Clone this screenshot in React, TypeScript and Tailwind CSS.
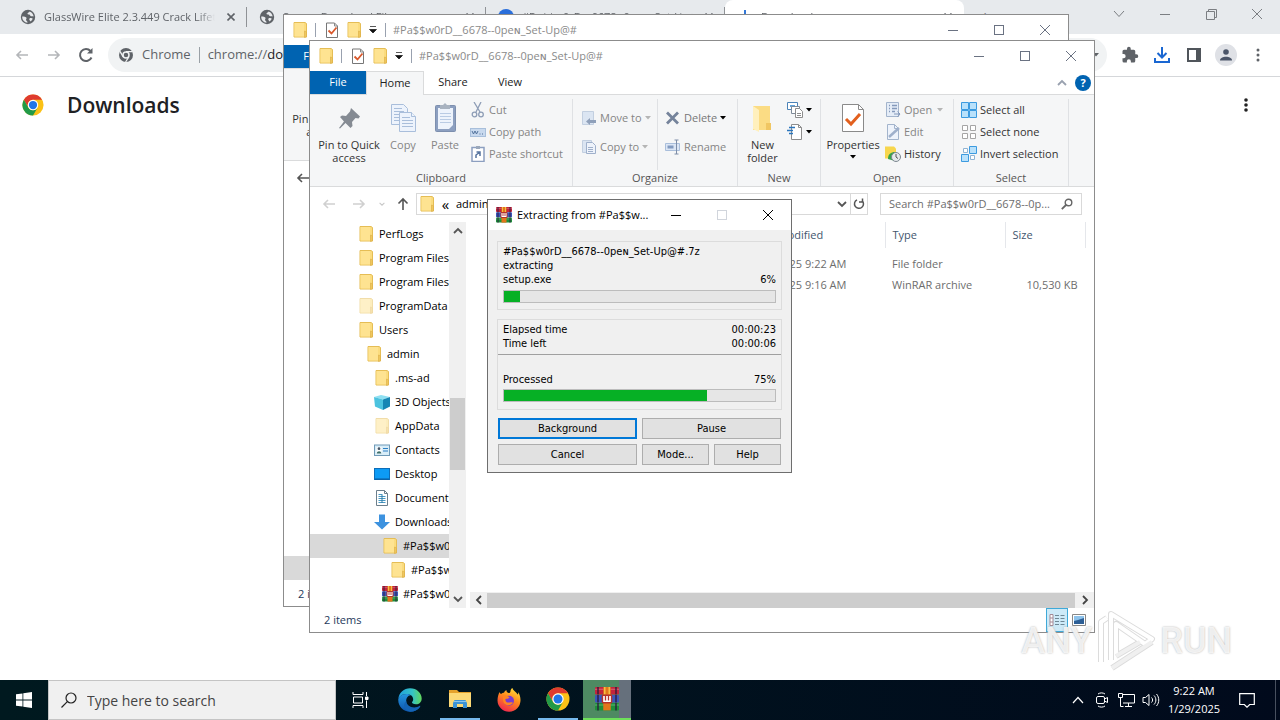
import React from 'react';

type IconProps = { className?: string };

const uiFont = "font-['Open_Sans','DejaVu_Sans',sans-serif]";

const treeRows = [
    { label: 'PerfLogs', icon: 'folder', indent: 'pl-[48px]' },
    { label: 'Program Files', icon: 'folder', indent: 'pl-[48px]' },
    { label: 'Program Files (x86)', icon: 'folder', indent: 'pl-[48px]' },
    { label: 'ProgramData', icon: 'faded', indent: 'pl-[48px]' },
    { label: 'Users', icon: 'folder', indent: 'pl-[48px]' },
    { label: 'admin', icon: 'folder', indent: 'pl-[56px]' },
    { label: '.ms-ad', icon: 'folder', indent: 'pl-[64px]' },
    { label: '3D Objects', icon: 'cube', indent: 'pl-[64px]' },
    { label: 'AppData', icon: 'faded', indent: 'pl-[64px]' },
    { label: 'Contacts', icon: 'contacts', indent: 'pl-[64px]' },
    { label: 'Desktop', icon: 'desktop', indent: 'pl-[64px]' },
    { label: 'Documents', icon: 'documents', indent: 'pl-[64px]' },
    { label: 'Downloads', icon: 'downloads', indent: 'pl-[64px]' },
    { label: '#Pa$$w0rD__6678--0peɴ_Set-Up@#', icon: 'folder', indent: 'pl-[72px]' },
    { label: '#Pa$$w0rD__6678--0peɴ_Set-Up@#', icon: 'folder', indent: 'pl-[80px]' },
    { label: '#Pa$$w0rD__6678--0peɴ_Set-Up@#.7z', icon: 'rar', indent: 'pl-[72px]' },
];

const FolderIcon: React.FC<IconProps> = ({ className = 'size-4' }) => (
    <svg viewBox="0 0 16 16" className={className}>
        <path d="M2 .5h11l1.500 1v13.500H2z" fill="#fbdc7e" stroke="#e5bd55" />
        <path d="M2.500 1h9.500v13.500H2.500z" fill="#fee391" />
        <path d="M12.500 9l2 .8v5l-2 .7z" fill="#efc75e" stroke="#dcae48" strokeWidth=".6" />
    </svg>
);

const CheckDoc: React.FC<IconProps> = ({ className = 'size-4' }) => (
    <svg viewBox="0 0 16 16" className={className} fill="none">
        <path d="M2.500 1h8l3 3v11.500h-11z" fill="#fff" stroke="#777" />
        <path d="M10.500 1v3h3" stroke="#888" />
        <path d="M4.500 8.500l3 3 5-6" stroke="#d9582b" strokeWidth="1.800" />
    </svg>
);

const RarIcon: React.FC<IconProps> = ({ className = 'size-4' }) => (
    <svg viewBox="0 0 16 16" className={className}>
        <rect y="0" width="16" height="5" rx=".8" fill="#c2243c" />
        <rect y="5.300" width="16" height="5" rx=".8" fill="#3a55b8" />
        <rect y="10.600" width="16" height="5" rx=".8" fill="#1d8f3a" />
        <path d="M0 1.500h16M0 12h16" stroke="#fff" strokeOpacity=".3" strokeWidth=".7" />
        <path d="M2 0v5M14 0v5M2 5.300v5M14 5.300v5M2 10.600v5M14 10.600v5" stroke="#2b1a3c" strokeWidth=".9" />
        <rect x="5.500" width="5" height="15.600" fill="#e2761b" />
        <path d="M6.500 0v5M9.500 0v5" stroke="#f5c044" />
        <rect x="4.500" y="5" width="7" height="6" rx="1" fill="#b5332b" />
        <path d="M6 6v3.500h4V6M8 6v3.500" stroke="#fff" strokeWidth="1.100" fill="none" />
    </svg>
);

const ChromeLogo: React.FC<IconProps> = ({ className }) => (
    <svg viewBox="0 0 24 24" className={className}>
        <circle cx="12" cy="12" r="11.500" fill="#fbc116" />
        <path d="M2.040 6.250A11.500 11.500 0 0 1 21.960 6.250H12a5.750 5.750 0 0 0-4.980 8.630z" fill="#df3b2f" />
        <path d="M2.040 6.250A11.500 11.500 0 0 0 12 23.500l4.980-8.620a5.750 5.750 0 0 1-9.960 0z" fill="#229a48" />
        <circle cx="12" cy="12" r="5.700" fill="#fff" />
        <circle cx="12" cy="12" r="4.500" fill="#2176e8" />
    </svg>
);

const ChromeMono: React.FC<IconProps> = ({ className }) => (
    <svg viewBox="0 0 16 16" className={className} fill="none">
        <circle cx="8" cy="8" r="7" fill="#5f6368" />
        <circle cx="8" cy="8" r="3" stroke="#f1f3f4" strokeWidth="1.500" />
        <path d="M8 4.700h6.500M5.200 9.800L2 4.300M10.800 9.800L7.600 15" stroke="#f1f3f4" strokeWidth="1.300" />
    </svg>
);

const GlobeIcon: React.FC<IconProps> = ({ className = 'size-4' }) => (
    <svg viewBox="0 0 16 16" className={className}>
        <circle cx="8" cy="8" r="7.200" fill="#5f6368" />
        <path d="M2.200 7.500c2 .1 3.800.2 4.300 1.300.4 1.200-1 1.500-.2 2.600.5.700 1.200.6 1.200 2.400C4.500 13.500 2 11 2.200 7.500zM9.500 2.500c-.3 1.300-1.800 1-2 2.100-.2.900.8.900 1.800.9.900.1.500 1.500 1.700 1.700 1 .2 1.500-.3 2.600.4-.1-2.400-1.600-4.400-4.100-5.100zM9.500 9.500c1-.8 2.700-.6 3.300.3-.5 1.200-1.300 2-2.300 2.700-.5-1-1.900-2-1-3z" fill="#e8eaed" />
    </svg>
);

const CloseX: React.FC<IconProps> = ({ className }) => (
    <svg viewBox="0 0 12 12" className={className} fill="none" stroke="currentColor">
        <path d="M1 1l10 10M11 1L1 11" />
    </svg>
);

const Caret: React.FC<IconProps> = ({ className = 'text-black' }) => (
    <svg viewBox="0 0 6 4" className={`h-1 w-1.5 shrink-0 ${className}`}>
        <path d="M0 0h6L3 3.500z" fill="currentColor" />
    </svg>
);

const Chevron: React.FC<IconProps & { dir: 'up' | 'down' | 'left' | 'right' }> = ({ className = 'size-2.5', dir }) => {
    const paths = { up: 'M1 7l4-4 4 4', down: 'M1 3l4 4 4-4', left: 'M7 1L3 5l4 4', right: 'M3 1l4 4-4 4' };
    return (
        <svg viewBox="0 0 10 10" className={className} fill="none" stroke="currentColor" strokeWidth="1.800">
            <path d={paths[dir]} />
        </svg>
    );
};

const Arrow: React.FC<IconProps & { dir: 'up' | 'left' | 'right' }> = ({ className = 'size-4', dir }) => {
    const paths = { up: 'M8 14V3M3.500 7.500L8 3l4.500 4.500', left: 'M14 8H3M7 4L3 8l4 4', right: 'M2 8h11M9 4l4 4-4 4' };
    return (
        <svg viewBox="0 0 16 16" className={className} fill="none" stroke="currentColor" strokeWidth="1.600">
            <path d={paths[dir]} />
        </svg>
    );
};

const TreeIcon: React.FC<{ kind: string }> = ({ kind }) => {
    if (kind === 'folder') return <FolderIcon className="size-4 shrink-0" />;
    if (kind === 'faded') return <FolderIcon className="size-4 shrink-0 opacity-50" />;
    if (kind === 'rar') return <RarIcon className="size-4 shrink-0" />;
    return (
        <svg viewBox="0 0 16 16" className="size-4 shrink-0">
            {kind === 'cube' && (
                <>
                    <path d="M0 3l7-2 9 2-7 2.500z" fill="#8fe0f2" />
                    <path d="M0 3l9 2.500V16l-8-3.500z" fill="#4cc3df" />
                    <path d="M9 5.500L16 3v9.500L9 16z" fill="#1686b4" />
                </>
            )}
            {kind === 'contacts' && (
                <>
                    <rect x=".5" y="3" width="15" height="10.500" fill="#d8edf8" stroke="#6f9ab7" />
                    <rect x="2.500" y="5" width="5" height="6.500" fill="#fff" />
                    <circle cx="5" cy="6.700" r="1.400" fill="#456" />
                    <path d="M2.800 11.500c0-3 4.500-3 4.500 0z" fill="#3d6f6a" />
                    <path d="M9 6.500h5M9 9h5" stroke="#2c7fc4" strokeWidth="1.200" />
                </>
            )}
            {kind === 'desktop' && (
                <>
                    <rect x=".5" y="2.500" width="15" height="11" fill="#0d9bf5" stroke="#0d6db8" />
                    <path d="M1 13h14" stroke="#0a5a9c" />
                </>
            )}
            {kind === 'documents' && (
                <>
                    <path d="M2.500.5h8l3 3v12h-11z" fill="#fff" stroke="#6c7f8c" />
                    <path d="M10.500.5v3h3" fill="none" stroke="#6c7f8c" />
                    <path d="M4.500 4.500h4M4.500 6.500h7M4.500 8.500h7M4.500 10.500h7M4.500 12.500h7" stroke="#4a9ac4" />
                    <path d="M8 5v8" stroke="#2f7ba6" />
                </>
            )}
            {kind === 'downloads' && <path d="M5 .5h6v7.500h5L8 15.500 0 8h5z" fill="#3d92df" />}
        </svg>
    );
};

const WindowButtons: React.FC<{ dialog?: boolean }> = ({ dialog }) => {
    const tone = dialog ? 'text-black' : 'text-gray-500';
    return (
        <div className={`flex h-full shrink-0 ${tone}`}>
            <button aria-label="Minimize" className="flex w-[46px] items-center justify-center">
                <span className="h-px w-2.5 bg-current" />
            </button>
            <button aria-label="Maximize" className="flex w-[46px] items-center justify-center">
                <span className={`size-2.5 border ${dialog ? 'border-gray-300' : 'border-current'}`} />
            </button>
            <button aria-label="Close" className="flex w-[46px] items-center justify-center">
                <CloseX className="size-3" />
            </button>
        </div>
    );
};

const RibbonGroup: React.FC<{ label: string; className: string; children: React.ReactNode }> = ({ label, className, children }) => (
    <section className={`flex shrink-0 flex-col border-r border-[#dfe1e4] ${className}`}>
        <div className="flex h-[73px] text-[#858585]">{children}</div>
        <h3 className="text-center leading-4 text-[#555]">{label}</h3>
    </section>
);

const BigButton: React.FC<{ label: string; className: string; icon: React.ReactNode; caret?: boolean }> = ({ label, className, icon, caret }) => (
    <button className={`flex flex-col items-center justify-start pt-[3px] leading-[13px] ${className}`}>
        {icon}
        <span className="pt-1">{label}</span>
        {caret && <span className="flex h-3 items-center"><Caret /></span>}
    </button>
);

const SmallButton: React.FC<{ label?: string; name?: string; icon: React.ReactNode; caret?: string; className?: string }> = ({ label, name, icon, caret, className = '' }) => (
    <button aria-label={name} className={`flex h-[22px] items-center gap-[3px] whitespace-nowrap ${className}`}>
        <svg viewBox="0 0 16 16" className="size-4 shrink-0" fill="none">{icon}</svg>
        {label && <span>{label}</span>}
        {caret && <Caret className={caret} />}
    </button>
);

const pageFold = (
    <>
        <path d="M2.500.5h7l4 4v11h-11z" fill="#eef3fb" stroke="#a3b4cc" />
        <path d="M9.500.5v4h4" stroke="#a3b4cc" />
    </>
);

const Ribbon: React.FC = () => (
    <div className="flex h-[92px] overflow-hidden border-b border-[#dadbdc] bg-[#f5f6f7] pt-1">
        <RibbonGroup label="Clipboard" className="w-[263px]">
            <BigButton
                label="Pin to Quick access"
                className="ml-1.5 w-[66px] text-[#333]"
                icon={
                    <svg viewBox="0 0 32 32" className="size-8">
                        <path d="M18 6l9 8.500-1.500 2-3-.5-3.500 4 .5 4-2 2-5-5L7 26.500l-1-.5L11 19.500 7 15l2-1.500 4 .5 4-4.500z" fill="#858b93" />
                    </svg>
                }
            />
            <BigButton
                label="Copy"
                className="w-[42px]"
                icon={
                    <svg viewBox="0 0 32 32" className="size-8" fill="#edf3fc" stroke="#a9bedb">
                        <path d="M4.500 2.500h12l4 4v16h-16z" />
                        <path d="M7 6.500h8M7 9.500h10M7 12.500h10M7 15.500h10M7 18.500h10" />
                        <path d="M12.500 10.500h12l4 4v15h-16z" />
                        <path d="M24.500 10.500v4h4M15 15.500h8M15 18.500h11M15 21.500h11M15 24.500h11" />
                    </svg>
                }
            />
            <BigButton
                label="Paste"
                className="w-[42px]"
                icon={
                    <svg viewBox="0 0 32 32" className="size-8">
                        <rect x="6.500" y="3.500" width="20" height="26" rx="1" fill="#8c9fc0" stroke="#7d8fae" />
                        <path d="M9 6h15v17l-4 4H9z" fill="#edf3fc" />
                        <path d="M11 11.500h11M11 14.500h11M11 17.500h11M11 20.500h11" stroke="#b9cbe4" />
                        <path d="M11 3h3l2-2 2 2h3v4H11z" fill="#a9b3c0" />
                    </svg>
                }
            />
            <div className="ml-1 flex flex-col">
                <SmallButton
                    label="Cut"
                    icon={
                        <g stroke="#8e9db6" strokeWidth="1.300">
                            <path d="M4 0l6 10M11 0L6 10" />
                            <circle cx="4.500" cy="12.500" r="2.300" />
                            <circle cx="11" cy="12.500" r="2.300" />
                        </g>
                    }
                />
                <SmallButton
                    label="Copy path"
                    icon={
                        <>
                            <rect x=".5" y="4.500" width="15" height="8" fill="#c8d9ee" stroke="#a8bfdb" />
                            <path d="M2 7l1.500 3L5 7l1.500 3L8 7M9.500 10h1M12 10h1" stroke="#51719b" />
                        </>
                    }
                />
                <SmallButton
                    label="Paste shortcut"
                    icon={
                        <>
                            <rect x="2" y="1.500" width="12" height="14" fill="#fff" stroke="#8c9fc0" strokeWidth="1.500" />
                            <path d="M6 0h4v3H6z" fill="#9ba8bb" />
                            <path d="M6 12V9l4-3M6.500 6H10v4" stroke="#57749f" strokeWidth="1.500" />
                        </>
                    }
                />
            </div>
        </RibbonGroup>
        <RibbonGroup label="Organize" className="w-[165px]">
            <div className="flex w-[85px] flex-col gap-[7px] border-r border-[#dfe1e4] pt-2 pl-2">
                <SmallButton label="Move to" caret="text-[#b5b5b5]" icon={<><path d="M1.500 1.500h11v13h-11z" fill="#dbe5f2" stroke="#c2cfe0" /><path d="M15 10v3H9v2l-4-3.500L9 8v2z" fill="#8fa0ba" /></>} />
                <SmallButton label="Copy to" caret="text-[#b5b5b5]" icon={<><path d="M1.500 1.500h9v12h-9z" fill="#dbe5f2" stroke="#c2cfe0" /><path d="M5.500 3.500h6l3 3v8h-9z" fill="#eef3fb" stroke="#9fb0cb" /><path d="M7 8.500h5M7 10.500h5M7 12.500h5" stroke="#9fb0cb" /></>} />
            </div>
            <div className="flex flex-col gap-[7px] pt-2 pl-[7px]">
                <SmallButton label="Delete" caret="text-black" className="text-[#777]" icon={<path d="M2 2.500l11 11M13 2.500l-11 11" stroke="#75839b" strokeWidth="2.800" />} />
                <SmallButton label="Rename" icon={<><path d="M.5 4.500h14v7H.5z" fill="#dbe6f5" stroke="#a9bedb" /><path d="M2.500 6.500h6v3h-6z" fill="#829bc0" /><path d="M9.500 1h4M11.500 1v14M9.500 15h4" stroke="#7e8ea8" /></>} />
            </div>
        </RibbonGroup>
        <RibbonGroup label="New" className="w-[83px]">
            <BigButton
                label="New folder"
                className="w-[49px] text-[#333]"
                icon={
                    <svg viewBox="0 0 32 32" className="size-8">
                        <path d="M6 4h17v24H6z" fill="#fbdc84" />
                        <path d="M19 21h5v7h-5z" fill="#f0c662" />
                        <path d="M6 4l6 4v22l-6-3z" fill="#fff0bd" />
                    </svg>
                }
            />
            <div className="flex flex-col">
                <SmallButton name="New item" caret="text-black" icon={<g fill="#fff"><path d="M.5.5h10v7H.5z" stroke="#4b83b8" /><path d="M3 3h5v2H3z" fill="#62a4dc" /><path d="M4.500 4.500h8v7h-8z" stroke="#7d8a99" /><path d="M8.500 6.500h4l3 3v6h-7z" stroke="#8d8d8d" /><path d="M10 11.500h4M10 13.500h4" stroke="#8d8d8d" /></g>} />
                <SmallButton name="Easy access" caret="text-black" icon={<><path d="M4.500.5h7l3 3v12h-10z" fill="#fff" stroke="#8d8d8d" /><path d="M11.500.5v3h3" stroke="#8d8d8d" /><path d="M2 3.500h6M0 6.500h6M2 9.500h4" stroke="#2b76bd" strokeWidth="1.400" /></>} />
            </div>
        </RibbonGroup>
        <RibbonGroup label="Open" className="w-[133px]">
            <BigButton label="Properties" caret className="w-[64px] text-[#333]" icon={
                <svg viewBox="0 0 32 32" className="size-8" fill="none">
                    <path d="M5.500 2.500h16l5 5v22h-21z" fill="#fff" stroke="#8a8a8a" />
                    <path d="M21.500 2.500v5h5" stroke="#8a8a8a" />
                    <path d="M9 17l5 5 9-10" stroke="#e2601e" strokeWidth="3" />
                </svg>
            } />
            <div className="flex flex-col">
                <SmallButton label="Open" caret="ml-0.5 text-[#b5b5b5]" icon={<><path d="M1.500.5h12v14h-12z" fill="#e4ecf7" stroke="#a3b4cc" /><path d="M4 3.500h1M4 6.500h1M4 9.500h1M7 3.500h5M7 6.500h5M7 9.500h3" stroke="#8499bb" strokeWidth="1.500" /><path d="M9 12h6M12.500 9.500L15 12l-2.500 3" stroke="#8499bb" /></>} />
                <SmallButton label="Edit" icon={<>{pageFold}<path d="M4 13L14 4" stroke="#9fb0cb" strokeWidth="2.500" /></>} />
                <SmallButton label="History" className="text-[#333]" icon={<><path d="M0 .5h9l2 2v10H0z" fill="#f7d64d" /><path d="M3 13c0-5 3-7 7-7v9z" fill="#37a34a" /><circle cx="11" cy="11" r="4.500" fill="#e6e9ec" stroke="#7c8790" /><path d="M11 8v3l2 1.500" stroke="#555" /></>} />
            </div>
        </RibbonGroup>
        <RibbonGroup label="Select" className="w-[115px]">
            <div className="flex flex-col pl-[7px] text-[#333]">
                <SmallButton label="Select all" icon={<path d="M.5.5h7v7h-7zM8.500.5h7v7h-7zM.5 8.500h7v7h-7zM8.500 8.500h7v7h-7z" fill="#b9e1fb" stroke="#3c9be0" />} />
                <SmallButton label="Select none" icon={<path d="M1.500 1.500h5v5h-5zM9.500 1.500h5v5h-5zM1.500 9.500h5v5h-5zM9.500 9.500h5v5h-5z" fill="#fff" stroke="#a5a5a5" />} />
                <SmallButton label="Invert selection" icon={<><path d="M8.500.5h7v7h-7zM.5 8.500h7v7h-7z" fill="#b9e1fb" stroke="#3c9be0" /><path d="M2.500 2.500h4v4h-4zM9.500 9.500h4v4h-4z" fill="#fff" stroke="#8fb4d4" /></>} />
            </div>
        </RibbonGroup>
    </div>
);

const Explorer: React.FC<{ className: string; activeRow: number; canGoBack?: boolean }> = ({ className, activeRow, canGoBack }) => (
    <div className={`absolute flex h-[593px] w-[786px] flex-col overflow-hidden border border-[#8c8c8c] bg-white text-[11px] ${uiFont} ${className}`}>
        <header className="flex h-[30px] shrink-0 items-center pl-2">
            <FolderIcon />
            <span className="ml-[7px] h-3.5 w-px bg-gray-400" />
            <CheckDoc className="ml-2 size-4" />
            <FolderIcon className="ml-1.5 size-4" />
            <svg viewBox="0 0 8 8" className="ml-[7px] size-2">
                <path d="M1 .5h6M.5 3.500h7L4 7z" fill="#111" stroke="#111" strokeWidth=".7" />
            </svg>
            <span className="ml-2 h-3.5 w-px bg-gray-400" />
            <h2 className="ml-[7px] flex-1 truncate text-[#8a8a8a]">#Pa$$w0rD__6678--0peɴ_Set-Up@#</h2>
            <WindowButtons />
        </header>
        <nav className="flex h-6 shrink-0 border-b border-[#dadbdc] text-[#222]">
            <button className="w-14 bg-[#0063b1] text-white">File</button>
            <button className="-mb-px w-[58px] border border-b-0 border-[#dadbdc] bg-[#f5f6f7]">Home</button>
            <button className="w-[58px]">Share</button>
            <button className="w-14">View</button>
            <div className="ml-auto flex items-center gap-2 pr-[3px]">
                <Chevron dir="up" className="size-2.5 text-gray-400" />
                <button aria-label="Help" className="size-4 rounded-full bg-[#0063b1] leading-4 font-bold text-white">?</button>
            </div>
        </nav>
        <Ribbon />
        <div className="flex h-[35px] shrink-0 items-center pr-3 pb-px pl-[11px]">
            <button aria-label="Back" className={canGoBack ? 'text-[#555]' : 'text-[#d0d0d0]'}><Arrow dir="left" /></button>
            <button aria-label="Forward" className="ml-3.5 text-[#d0d0d0]"><Arrow dir="right" /></button>
            <Chevron dir="down" className="ml-3 size-1.5 text-[#c8c8c8]" />
            <button aria-label="Up" className="ml-2.5 text-[#555]"><Arrow dir="up" /></button>
            <div className="ml-[5px] flex h-[22px] min-w-0 flex-1 items-center overflow-hidden border border-[#d9d9d9] pl-0.5">
                <FolderIcon className="size-4 shrink-0" />
                <span className="w-[21px] text-center text-[15px] leading-3">«</span>
                <span className="flex-1 truncate">admin › Downloads › #Pa$$w0rD__6678--0peɴ_Set-Up@#</span>
                <Chevron dir="down" className="mx-[3px] size-2.5 shrink-0 text-[#555]" />
                <button aria-label="Refresh" className="flex h-full w-[17px] shrink-0 items-center justify-center border-l border-[#d9d9d9] text-[#555]">
                    <svg viewBox="0 0 12 12" className="size-3" fill="none" stroke="currentColor" strokeWidth="1.500">
                        <path d="M4 1.800A4.500 4.500 0 1 0 9 2.500M9.500.5v3.500H6" />
                    </svg>
                </button>
            </div>
            <label className="ml-3 flex h-[22px] w-[202px] shrink-0 items-center border border-[#d9d9d9] pr-2 pl-2">
                <input type="text" aria-label="Search" placeholder="Search #Pa$$w0rD__6678--0p..." className="min-w-0 flex-1 outline-none placeholder:text-[#6d6d6d]" />
                <svg viewBox="0 0 12 12" className="size-3 shrink-0" fill="none" stroke="#666">
                    <circle cx="7.500" cy="4.500" r="3.300" strokeWidth="1.400" />
                    <path d="M5 7L.8 11.200" strokeWidth="1.800" />
                </svg>
            </label>
        </div>
        <div className="flex min-h-0 flex-1">
            <ul className="w-[139px] shrink-0 overflow-hidden">
                {treeRows.map((row, i) => (
                    <li key={i}>
                        <button className={`flex h-6 w-full items-center gap-[5px] whitespace-nowrap ${row.indent} ${i === activeRow ? 'bg-[#d9d9d9]' : ''}`}>
                            <TreeIcon kind={row.icon} />
                            {row.label}
                        </button>
                    </li>
                ))}
            </ul>
            <div className="flex w-[17px] shrink-0 flex-col items-center bg-[#f0f0f0] py-1 text-[#555]">
                <Chevron dir="up" />
                <div className="mt-[162px] h-[72px] w-[15px] bg-[#cdcdcd]" />
                <Chevron dir="down" className="mt-auto size-2.5" />
            </div>
            <div className="ml-1 flex min-w-0 flex-1 flex-col">
                <table className="w-[616px] table-fixed text-left text-[#6d6d6d]">
                    <thead>
                        <tr className="h-[26px] text-[#43566e]">
                            <th className="w-[273px] border-r border-gray-200 pl-5 font-normal">Name</th>
                            <th className="w-[142px] border-r border-gray-200 pl-[7px] font-normal">Date modified</th>
                            <th className="w-[120px] border-r border-gray-200 pl-[7px] font-normal">Type</th>
                            <th className="border-r border-gray-200 pl-[7px] font-normal">Size</th>
                        </tr>
                    </thead>
                    <tbody className="before:block before:h-1.5">
                        <tr className="h-[21px]">
                            <td className="truncate pl-5">#Pa$$w0rD__6678--0peɴ_Set-Up@#</td>
                            <td className="pl-[7px]">1/29/2025 9:22 AM</td>
                            <td className="pl-[7px]">File folder</td>
                            <td />
                        </tr>
                        <tr className="h-[21px]">
                            <td className="truncate pl-5">#Pa$$w0rD__6678--0peɴ_Set-Up@#.7z</td>
                            <td className="pl-[7px]">1/29/2025 9:16 AM</td>
                            <td className="pl-[7px]">WinRAR archive</td>
                            <td className="pr-2 text-right">10,530 KB</td>
                        </tr>
                    </tbody>
                </table>
                <div className="mt-auto flex h-4 items-center bg-[#f0f0f0] text-[#444]">
                    <span className="flex w-[17px] justify-center"><Chevron dir="left" /></span>
                    <span className="h-[15px] flex-1 bg-[#cdcdcd]" />
                    <span className="flex w-[19px] justify-center"><Chevron dir="right" /></span>
                </div>
            </div>
        </div>
        <footer className="flex h-6 shrink-0 items-center pr-2 pl-3.5 text-[#1e395b]">
            2 items
            <button aria-label="Details" className="ml-auto flex h-full w-[22px] items-center justify-center border border-[#3fa9d8] bg-[#cdeaf8]">
                <svg viewBox="0 0 16 14" className="h-3.5 w-4" fill="none">
                    <path d="M1 1.500h3v11H1zM1 5h3M1 9h3" fill="#fff" stroke="#a58a96" />
                    <path d="M6 2.500h4M6 5.500h4M6 8.500h4M6 11.500h4M11.500 2.500h4M11.500 5.500h4M11.500 8.500h4M11.500 11.500h4" stroke="#6f8896" />
                </svg>
            </button>
            <button aria-label="Large icons" className="ml-1">
                <svg viewBox="0 0 14 12" className="h-3 w-3.5">
                    <path d="M.5.5h13v11H.5z" fill="#fff" stroke="#888" />
                    <path d="M2 2h10v8H2z" fill="#8dc3ec" />
                    <path d="M2 7l4-1 6-2v6H2z" fill="#2d5f96" />
                </svg>
            </button>
        </footer>
    </div>
);

const Progress: React.FC<{ value: number; label: string }> = ({ value, label }) => (
    <div role="progressbar" aria-label={label} aria-valuenow={value} className="h-[13px] border border-[#bcbcbc] bg-[#e6e6e6]">
        <div className="h-full bg-[#06b025]" style={{ width: `${value}%` }} />
    </div>
);

const ExtractDialog: React.FC = () => (
    <div className={`absolute top-[199px] left-[487px] w-[305px] border border-[#6e6e6e] bg-[#f0f0f0] text-black ${uiFont}`}>
        <header className="flex h-[30px] items-center bg-white pl-2">
            <RarIcon className="size-4 shrink-0" />
            <h2 className="ml-[5px] flex-1 truncate text-[11px]">Extracting from #Pa$$w...</h2>
            <WindowButtons dialog />
        </header>
        <div className="px-[9px] pt-[11px] pb-[7px] font-['DejaVu_Sans_Condensed','DejaVu_Sans',sans-serif] text-[11px] leading-[14px]">
            <section className="h-[69px] border border-[#dcdcdc] px-[5px] pt-[3px]">
                <p>#Pa$$w0rD__6678--0peɴ_Set-Up@#.7z</p>
                <p>extracting</p>
                <p className="flex justify-between"><span>setup.exe</span><span>6%</span></p>
                <div className="pt-[3px]"><Progress value={6} label="setup.exe" /></div>
            </section>
            <section className="mt-[9px] h-[91px] border border-[#dcdcdc] pt-[3px]">
                <div className="px-[5px]">
                    <p className="flex justify-between"><span>Elapsed time</span><span>00:00:23</span></p>
                    <p className="flex justify-between"><span>Time left</span><span>00:00:06</span></p>
                </div>
                <hr className="mt-[3px] border-[#a0a0a0]" />
                <div className="px-[5px] pt-[18px]">
                    <p className="flex justify-between pb-0.5"><span>Processed</span><span>75%</span></p>
                    <Progress value={75} label="Processed" />
                </div>
            </section>
            <div className="mt-2 grid grid-cols-4 gap-[5px] px-px">
                <button className="col-span-2 h-[21px] border-2 border-[#0078d7] bg-[#e1e1e1]">Background</button>
                <button className="col-span-2 h-[21px] border border-[#adadad] bg-[#e1e1e1]">Pause</button>
                <button className="col-span-2 h-[21px] border border-[#adadad] bg-[#e1e1e1]">Cancel</button>
                <button className="h-[21px] border border-[#adadad] bg-[#e1e1e1]">Mode...</button>
                <button className="h-[21px] border border-[#adadad] bg-[#e1e1e1]">Help</button>
            </div>
        </div>
    </div>
);

const BrowserTab: React.FC<{ title: string; icon: React.ReactNode; active?: boolean }> = ({ title, icon, active }) => (
    <div className={`flex w-[239px] shrink-0 items-center px-3 ${active ? 'rounded-t-lg bg-white' : ''}`}>
        {icon}
        <span className="ml-2 flex-1 overflow-hidden mask-r-from-90% text-[11px] whitespace-nowrap text-[#5f6368]">{title}</span>
        <button aria-label="Close tab" className="ml-3 text-[#5f6368]">
            <svg viewBox="0 0 8 8" className="size-2" fill="none" stroke="currentColor" strokeWidth="1.600"><path d="M.5.5l7 7M7.500.5l-7 7" /></svg>
        </button>
        {!active && <span className="-mr-3 ml-[11px] h-5 w-px bg-[#8f9296]" />}
    </div>
);

const DownloadGlyph: React.FC<IconProps> = ({ className }) => (
    <svg viewBox="0 0 18 18" className={className} fill="none" stroke="#1a67d2" strokeWidth="2">
        <path d="M9 1v10M4.500 7L9 11.500 13.500 7M2 12v4h14v-4" />
    </svg>
);

const Browser: React.FC = () => (
    <div className={`flex flex-1 flex-col bg-white ${uiFont}`}>
        <div className="flex h-[34px] bg-[#e7eaed] pl-2">
            <div className="flex min-w-0 flex-1 overflow-hidden">
                <BrowserTab title="GlassWire Elite 2.3.449 Crack Lifetime" icon={<GlobeIcon />} />
                <BrowserTab title="Secure Download File" icon={<GlobeIcon />} />
                <BrowserTab title="#Pa$$w0rD__6678--0peɴ_Set-Up@#" icon={<span className="size-4 shrink-0 rounded-full bg-[#2a6fdb]" />} />
                <BrowserTab title="Downloads" active icon={<DownloadGlyph className="size-4" />} />
                <button aria-label="New tab" className="ml-4 text-lg leading-4 text-[#5f6368]">+</button>
            </div>
            <div className="flex h-7 text-[#7b7e82]">
                <button aria-label="Search tabs" className="flex w-[46px] items-center justify-center">
                    <svg viewBox="0 0 12 8" className="h-2 w-3" fill="none" stroke="currentColor"><path d="M1 1l5 5.500L11 1" /></svg>
                </button>
                <button aria-label="Minimize" className="flex w-[46px] items-center justify-center"><span className="h-px w-2.5 bg-current" /></button>
                <button aria-label="Restore" className="flex w-[46px] items-center justify-center">
                    <svg viewBox="0 0 11 11" className="size-[11px]" fill="none" stroke="currentColor"><path d="M.5 2.500h8v8h-8zM2.500 2.500v-2h8v8h-2" /></svg>
                </button>
                <button aria-label="Close" className="flex w-[46px] items-center justify-center"><CloseX className="size-3" /></button>
            </div>
        </div>
        <div className="flex h-[43px] items-center border-b border-[#d5d7da] pr-3.5 pl-3.5 text-[#5f6368]">
            <button aria-label="Back" className="text-[#b4b6b9]"><Arrow dir="left" /></button>
            <button aria-label="Forward" className="ml-4 text-[#b4b6b9]"><Arrow dir="right" /></button>
            <button aria-label="Reload" className="ml-4">
                <svg viewBox="0 0 16 16" className="size-4" fill="none" stroke="#5f6368" strokeWidth="2">
                    <path d="M13.500 10.500A6 6 0 1 1 12.500 4" /><path d="M14.500 1v5.500H9z" fill="#5f6368" stroke="none" />
                </svg>
            </button>
            <div className="mr-3.5 ml-3.5 flex h-[34px] flex-1 items-center rounded-full bg-[#f1f3f4] pl-2.5 text-[13px]">
                <ChromeMono className="size-4" />
                <span className="ml-2">Chrome</span>
                <span className="mx-2 h-4 w-px bg-[#9aa0a6]" />
                <span>chrome://<span className="text-[#202124]">downloads</span></span>
                <Caret className="mr-2 ml-auto text-[#5f6368]" />
            </div>
            <svg viewBox="0 0 24 24" className="size-[18px]" fill="#5f6368">
                <path d="M20.500 11H19V7a2 2 0 0 0-2-2h-4V3.500a2.500 2.500 0 0 0-5 0V5H4a2 2 0 0 0-2 2v3.800h1.500a2.700 2.700 0 0 1 0 5.400H2V20a2 2 0 0 0 2 2h3.800v-1.500a2.700 2.700 0 0 1 5.400 0V22H17a2 2 0 0 0 2-2v-4h1.500a2.500 2.500 0 0 0 0-5z" />
            </svg>
            <DownloadGlyph className="ml-3.5 size-[18px]" />
            <svg viewBox="0 0 16 16" className="ml-[15px] size-4"><path d="M2 2h12v12H2z" fill="#fff" stroke="#50555b" strokeWidth="2" /><path d="M10 1h5v14h-5z" fill="#50555b" /></svg>
            <span className="ml-[13px] flex size-[22px] items-center justify-center rounded-full bg-[#dfe1e6]">
                <svg viewBox="0 0 14 14" className="size-3.5" fill="#4a5468"><circle cx="7" cy="4" r="2.800" /><path d="M1 12.500c0-5 12-5 12 0z" /></svg>
            </span>
            <svg viewBox="0 0 16 16" className="ml-[13px] size-4" fill="#5f6368"><circle cx="8" cy="3" r="1.500" /><circle cx="8" cy="8" r="1.500" /><circle cx="8" cy="13" r="1.500" /></svg>
        </div>
        <main className="flex items-center pt-3 pr-[26px] pl-[22px]">
            <ChromeLogo className="size-[22px]" />
            <h1 className="ml-[23px] text-[21px] leading-8 font-semibold text-[#202124]">Downloads</h1>
            <svg viewBox="0 0 16 16" className="ml-auto size-4" fill="#222"><circle cx="8" cy="3" r="1.800" /><circle cx="8" cy="8" r="1.800" /><circle cx="8" cy="13" r="1.800" /></svg>
        </main>
    </div>
);

const Watermark: React.FC = () => (
    <div className="absolute right-12 bottom-2 flex items-center gap-1 font-['Roboto','Liberation_Sans',sans-serif] text-[36px] leading-none font-medium text-white/80 [text-shadow:0_0_2px_#aaa]">
        <span>ANY</span>
        <svg viewBox="0 0 60 62" className="h-[62px] w-[60px]" fill="none" strokeLinejoin="round">
            <path d="M5 52V12l6-4M15 50V4l41 25-7 5L20 14v30M16 58l40-26M20 46l24-14" stroke="#dcdcdc" strokeWidth="6" />
            <path d="M5 52V12l6-4M15 50V4l41 25-7 5L20 14v30" stroke="#fff" strokeWidth="4" />
            <path d="M16 58l40-26M20 46l24-14" stroke="#f0f0f0" strokeWidth="4" />
        </svg>
        <span>RUN</span>
    </div>
);

const Taskbar: React.FC = () => (
    <div className={`flex h-10 bg-linear-to-r from-[#00191f] to-[#010a1c] text-white ${uiFont}`}>
        <button aria-label="Start" className="flex w-12 items-center justify-center">
            <svg viewBox="0 0 16 16" className="size-4" fill="#fff"><path d="M0 2.300L6.500 1.400v6.200H0zM7.300 1.300L16 0v7.600H7.300zM0 8.400h6.500v6.200L0 13.700zM7.300 8.400H16V16l-8.700-1.300z" /></svg>
        </button>
        <label className="flex w-72 items-center border border-[#c4c4c4] bg-[#f0f0f0] pl-3">
            <svg viewBox="0 0 16 16" className="size-4" fill="none" stroke="#222" strokeWidth="1.200"><circle cx="10" cy="6" r="5" /><path d="M6.300 9.700L.5 15.500" /></svg>
            <input type="text" aria-label="Search" placeholder="Type here to search" className="ml-2.5 min-w-0 flex-1 text-[14px] outline-none placeholder:text-[#444]" />
        </label>
        <button aria-label="Task View" className="flex w-12 items-center justify-center">
            <svg viewBox="0 0 17 16" className="h-4 w-[17px]" fill="none" stroke="#fff"><path d="M1 0v2.500h10V0M1.500 5h9v6h-9zM1 16v-2.500h10V16M14.500 0v4M14.500 8.500V16" /><path d="M13.500 5h2.500v2.500h-2.500z" fill="#fff" /></svg>
        </button>
        <button aria-label="Microsoft Edge" className="flex w-[52px] items-center justify-center">
            <svg viewBox="0 0 24 24" className="size-6">
                <defs>
                    <linearGradient id="edgeTop" x1="0" x2="1"><stop offset="0" stopColor="#1f9fe0" /><stop offset=".6" stopColor="#35c3c6" /><stop offset="1" stopColor="#62d75c" /></linearGradient>
                    <linearGradient id="edgeBody" x1="0" y1="0" x2="0" y2="1"><stop offset="0" stopColor="#2494de" /><stop offset="1" stopColor="#0d55ad" /></linearGradient>
                </defs>
                <path d="M.3 11C1 4.500 6 .3 12 .3c7 0 11.700 5 11.700 10.200 0 3.500-2.500 5.800-5.700 5.800-3 0-4-1.200-4-1.800 0-.7 1.200-1.200 1.200-3.200 0-2.800-2.700-5.200-6.500-5.200C4.500 6.100 1.500 8.300.3 11z" fill="url(#edgeTop)" />
                <path d="M.3 11C1.500 8 4.700 6.100 8.700 6.100c1.500 0 3 .4 4 1.200-3 .2-4.500 2.900-4.500 5.700 0 3.500 3.500 6.500 8 6.500 2.300 0 4.300-.8 5.300-1.500.6-.4 1 .1.600.7-2.300 3.500-6 5-10 5C5 23.700-.2 18 .3 11z" fill="url(#edgeBody)" />
                <path d="M8.200 13c0 5.500 6 10.500 13.900 5.700-2.300 3.500-6 5-10 5-6-1-7.900-7.200-3.900-10.700z" fill="#1464b5" />
            </svg>
        </button>
        <button aria-label="File Explorer" className="mx-1 flex w-10 items-center justify-center border-b-2 border-[#76b9ed]">
            <svg viewBox="0 0 22 20" className="h-5 w-[22px]">
                <path d="M0 1h8l2 2h12v4H0z" fill="#e5a22c" /><path d="M0 4h22v14H0z" fill="#fcd976" />
                <path d="M4 19v-5l1.500-3h11l1.500 3v5h-4v-4H8v4z" fill="#3c93d4" /><path d="M5 12.500h12" stroke="#8bc6ee" />
            </svg>
        </button>
        <button aria-label="Firefox" className="flex w-[50px] items-center justify-center">
            <svg viewBox="0 0 24 24" className="size-6">
                <defs><linearGradient id="fox" x1=".8" y1="0" x2=".3" y2="1"><stop offset="0" stopColor="#ffe23d" /><stop offset=".45" stopColor="#ff8a1c" /><stop offset="1" stopColor="#f0254f" /></linearGradient></defs>
                <path d="M2.500 4c.4 1 .8 1.500 1.500 2 1-1 2-1.300 3-1.300C7.500 3.500 8.500 2.500 9.500 2c-.3 1.500.5 2.500 2 3 1 .3 2-.5 2-2 0-1 .7-2.300 2-3 .3 2.500 4 4 5 6.500.8-.3.800-1.500.5-2.500 1.700 2 2.500 5 2.500 8A11.500 11.500 0 0 1 .5 12.500C.5 9 1.500 6 2.500 4z" fill="url(#fox)" />
                <circle cx="12" cy="12.800" r="5" fill="#7a3bd0" /><path d="M6 8c2.500-1 5 0 6.500 1.500-1 1.500-3 1-4 1.500-.5 3 2 4 4 3.500 2-.5 3-.5 3.500.3-2 4-9.500 3.200-10-2.800z" fill="#ff8420" />
            </svg>
        </button>
        <button aria-label="Chrome" className="mx-1 flex w-10 items-center justify-center border-b-2 border-[#76b9ed]"><ChromeLogo className="size-6" /></button>
        <button aria-label="WinRAR" className="ml-px flex w-12 items-center justify-center border-b-2 border-[#6ee05a] bg-linear-to-r from-[#4e8a62] from-75% to-[#66707c] to-75%"><RarIcon className="size-6" /></button>
        <div className="ml-auto flex items-center">
            <svg viewBox="0 0 12 8" className="h-2 w-3" fill="none" stroke="#fff" strokeWidth="1.200"><path d="M1 7l5-5.500L11 7" /></svg>
            <svg viewBox="0 0 16 16" className="ml-2.5 size-4" fill="none" stroke="#fff"><rect x="2.500" y="4.500" width="8" height="7" rx="1.500" /><path d="M10.500 7l3-1.500v5L10.500 9M4 2c2-1.500 5-1.500 7 0M4 14c2 1.500 5 1.500 7 0" /></svg>
            <svg viewBox="0 0 17 16" className="ml-2 h-4 w-[17px]" fill="none" stroke="#fff"><path d="M5 2.500h11.500v8.500H5M10.500 11v3.500M7 14.500h7M.5 1.500h4v4h-4zM2.500 5.500v9h3" /></svg>
            <svg viewBox="0 0 18 16" className="ml-[7px] h-4 w-[18px]" fill="none" stroke="#fff"><path d="M1 5.500h2.500L7 2.500v11L3.500 10.500H1zM9.500 5.500c1.500 1.500 1.500 3.500 0 5M12 3.500c2.500 2.500 2.500 6.500 0 9M14.500 2c3 3.500 3 8.500 0 12" /></svg>
            <div className="w-[68px] text-center text-[11px] leading-[18px]"><p>9:22 AM</p><p>1/29/2025</p></div>
            <svg viewBox="0 0 16 16" className="ml-[11px] size-4" fill="none" stroke="#fff" strokeWidth="1.200"><path d="M.7 1.700h14.600v10.800h-4.600L8 15.200l-2.700-2.700H.7z" /></svg>
            <span className="mr-1 ml-5 h-10 w-px bg-[#48505f]" />
        </div>
    </div>
);

const App: React.FC = () => {
    return (
        <div className="flex min-h-screen flex-col overflow-hidden">
            <div className="relative flex flex-1 flex-col">
                <Browser />
                <Explorer className="top-[14px] left-[283px]" activeRow={15} canGoBack />
                <Explorer className="top-[40px] left-[309px]" activeRow={13} />
                <ExtractDialog />
                <Watermark />
            </div>
            <Taskbar />
        </div>
    );
};

export default App;
